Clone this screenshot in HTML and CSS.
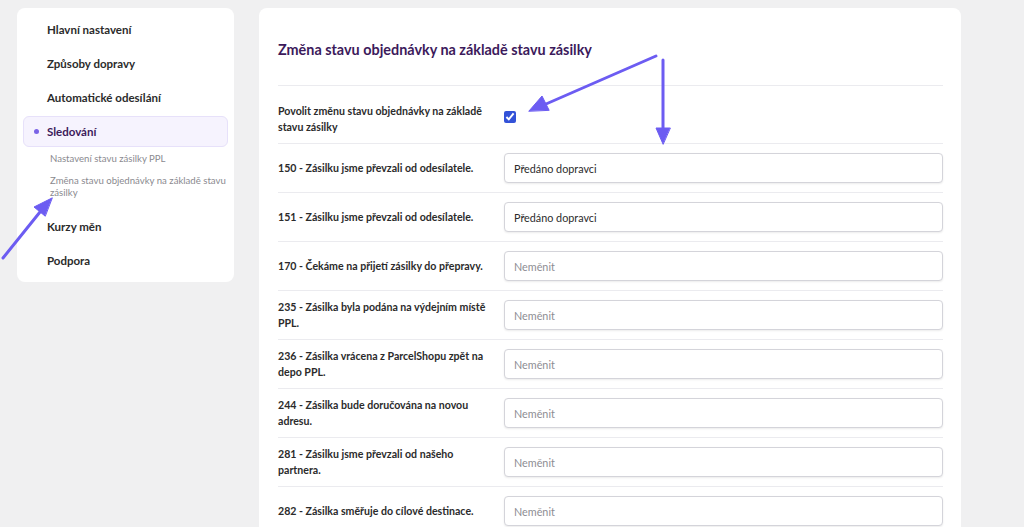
FILE: index.html
```html
<!DOCTYPE html>
<html lang="cs">
<head>
    <meta charset="UTF-8">
    <title>Sledování zásilek</title>
    <link rel="stylesheet" href="styles.css">
</head>
<body>

    <div class="page">
        <nav class="menu">
            <a class="menu-item">Hlavní nastavení</a>
            <a class="menu-item">Způsoby dopravy</a>
            <a class="menu-item">Automatické odesílání</a>
            <a class="menu-item active"><span class="dot"></span>Sledování</a>
            <div class="submenu">
                <a>Nastavení stavu zásilky PPL</a>
                <a>Změna stavu objednávky na základě stavu zásilky</a>
            </div>
            <a class="menu-item">Kurzy měn</a>
            <a class="menu-item">Podpora</a>
        </nav>

        <main class="panel">
            <h1>Změna stavu objednávky na základě stavu zásilky</h1>

            <div class="row row-check">
                <label for="povolit">Povolit změnu stavu objednávky na základě stavu zásilky</label>
                <div class="field"><input type="checkbox" id="povolit" checked></div>
            </div>
            <div class="row">
                <label>150 - Zásilku jsme převzali od odesílatele.</label>
                <div class="field"><input type="text" value="Předáno dopravci"></div>
            </div>
            <div class="row">
                <label>151 - Zásilku jsme převzali od odesílatele.</label>
                <div class="field"><input type="text" value="Předáno dopravci"></div>
            </div>
            <div class="row">
                <label>170 - Čekáme na přijetí zásilky do přepravy.</label>
                <div class="field"><input type="text" placeholder="Neměnit"></div>
            </div>
            <div class="row">
                <label>235 - Zásilka byla podána na výdejním místě PPL.</label>
                <div class="field"><input type="text" placeholder="Neměnit"></div>
            </div>
            <div class="row">
                <label>236 - Zásilka vrácena z ParcelShopu zpět na depo PPL.</label>
                <div class="field"><input type="text" placeholder="Neměnit"></div>
            </div>
            <div class="row">
                <label>244 - Zásilka bude doručována na novou adresu.</label>
                <div class="field"><input type="text" placeholder="Neměnit"></div>
            </div>
            <div class="row">
                <label>281 - Zásilku jsme převzali od našeho partnera.</label>
                <div class="field"><input type="text" placeholder="Neměnit"></div>
            </div>
            <div class="row">
                <label>282 - Zásilka směřuje do cílové destinace.</label>
                <div class="field"><input type="text" placeholder="Neměnit"></div>
            </div>
        </main>
    </div>

    <!-- šipky přes obrázek -->
    <svg class="arrows" width="1024" height="527" viewBox="0 0 1024 527">
        <g stroke="#6c5cf2" stroke-width="3" stroke-linecap="round" fill="#6c5cf2">
            <line x1="3" y1="258" x2="40" y2="212"/>
            <path d="M52 198 L34 207 L45 216 Z" stroke-width="1" stroke-linejoin="round"/>
            <line x1="656" y1="56" x2="546" y2="104"/>
            <path d="M529 111 L542 96 L549 110 Z" stroke-width="1" stroke-linejoin="round"/>
            <line x1="663" y1="60" x2="663" y2="128"/>
            <path d="M663 144 L656 128 L670 128 Z" stroke-width="1" stroke-linejoin="round"/>
        </g>
    </svg>

</body>
</html>
```

FILE: styles.css
```css
body {
    margin: 0;
    background-color: #f0f0f1;
    font-family: Lato, "Noto Sans", Arial, sans-serif;
    color: #2b2b2b;
    overflow: hidden;
}
.page {
    display: flex;
    align-items: flex-start;
    gap: 25px;
    padding: 8px 17px;
}
.menu {
    width: 217px;
    box-sizing: border-box;
    background-color: #fff;
    border-radius: 8px;
    padding: 4px 6px 5px;
    display: flex;
    flex-direction: column;
}
.menu-item {
    display: flex;
    align-items: center;
    box-sizing: border-box;
    height: 31px;
    margin: 1.5px 0;
    padding-left: 23px;
    border: 1px solid transparent;
    border-radius: 6px;
    font-size: 11.5px;
    font-weight: 700;
    color: #2b2b2b;
}
.menu-item.active {
    background-color: #f6f3fe;
    border-color: #e7e1fa;
    color: #3c1a5b;
    position: relative;
}
.dot {
    position: absolute;
    left: 10px;
    top: 12px;
    width: 5px;
    height: 5px;
    border-radius: 50%;
    background-color: #7a63e6;
}
.submenu {
    display: flex;
    flex-direction: column;
    gap: 10px;
    padding: 5px 0 10px 27px;
}
.submenu a {
    font-size: 9.6px;
    line-height: 12px;
    color: #8a8a8f;
}
.panel {
    width: 702px;
    height: 540px;
    box-sizing: border-box;
    background-color: #fff;
    border-radius: 8px;
    padding: 0 18px 0 19px;
}
h1 {
    margin: 0;
    height: 78px;
    box-sizing: border-box;
    padding-top: 33px;
    font-size: 14.4px;
    line-height: 18px;
    font-weight: 700;
    color: #3c1a5b;
    border-bottom: 1px solid #ebebef;
}
.row {
    display: flex;
    align-items: center;
    height: 48px;
    border-bottom: 1px solid #ebebef;
}
.row-check {
    height: 57px;
}
.row label {
    width: 226px;
    flex-shrink: 0;
    padding-right: 10px;
    box-sizing: border-box;
    font-size: 10.6px;
    line-height: 16px;
    font-weight: 700;
    color: #2b2b2b;
}
.row-check label {
    padding-top: 8px;
}
.field {
    flex: 1;
}
.field input[type="text"] {
    width: 100%;
    height: 30px;
    box-sizing: border-box;
    border: 1px solid #d4d4da;
    border-radius: 4px;
    box-shadow: 0 1px 2px rgba(0,0,0,0.08);
    padding: 0 9px;
    font-family: inherit;
    font-size: 10.8px;
    color: #2b2b2b;
}
.field input::placeholder {
    color: #8d8d93;
}
.field input[type="checkbox"] {
    margin: 8px 0 0;
    width: 12px;
    height: 12px;
    accent-color: #3352d8;
}
.arrows {
    position: absolute;
    left: 0;
    top: 0;
    pointer-events: none;
}
```
